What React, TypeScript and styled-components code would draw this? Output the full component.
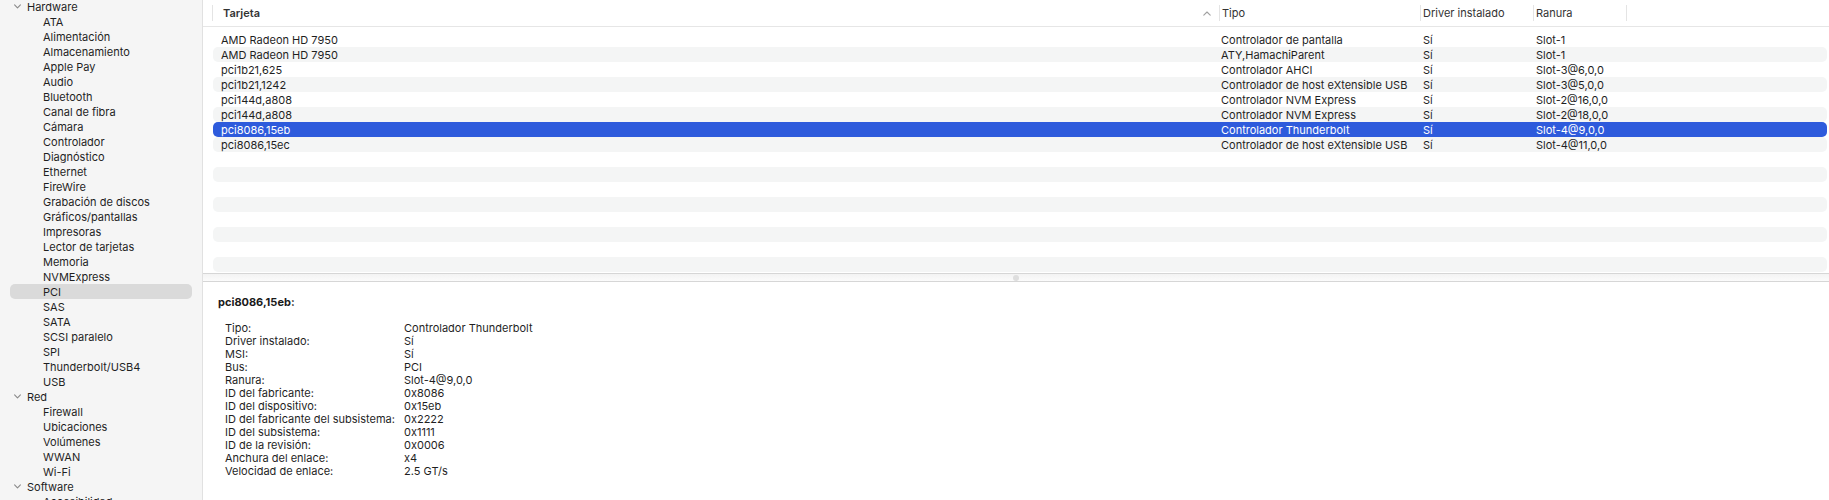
import React from "react";
import styled, { createGlobalStyle } from "styled-components";

const Global = createGlobalStyle`
  html, body { margin: 0; padding: 0; background: #ffffff; }
  body { font-family: Inter, "Liberation Sans", Arial, sans-serif; -webkit-font-smoothing: antialiased; }
  * { box-sizing: border-box; }
`;

const Window = styled.div`
  display: flex;
  width: 1829px;
  height: 500px;
  overflow: hidden;
  font-size: 11px;
  color: #1f1f1f;
`;

const Sidebar = styled.nav`
  width: 203px;
  flex: none;
  background: #f5f5f5;
  border-right: 1px solid #e1e1e1;
  overflow: hidden;
`;

const SideList = styled.ul`
  list-style: none;
  margin: -1px 0 0 0;
  padding: 0 10px;
  display: flex;
  flex-direction: column;
`;

const SideRow = styled.li<{ $group?: boolean; $active?: boolean }>`
  height: 15px;
  display: flex;
  align-items: center;
  padding-left: ${(p) => (p.$group ? "4px" : "33px")};
  border-radius: 5px;
  background: ${(p) => (p.$active ? "#dadada" : "transparent")};
  white-space: nowrap;
  color: #1f1f1f;
`;

const Chevron = styled.svg`
  width: 7px;
  height: 5px;
  margin-right: 6px;
  flex: none;
`;

const Main = styled.main`
  flex: 1;
  display: flex;
  flex-direction: column;
  min-width: 0;
`;

const TableArea = styled.section`
  height: 273px;
  flex: none;
  display: flex;
  flex-direction: column;
  overflow: hidden;
`;

const Header = styled.div`
  height: 27px;
  flex: none;
  display: flex;
  align-items: center;
  padding-left: 9px;
  border-bottom: 1px solid #e6e6e6;
  color: #333333;
`;

const HeadCell = styled.div<{ $w: number; $pad: number; $bold?: boolean; $last?: boolean }>`
  width: ${(p) => p.$w}px;
  height: 16px;
  display: flex;
  align-items: center;
  padding-left: ${(p) => p.$pad}px;
  padding-right: 8px;
  border-left: 1px solid #e4e4e4;
  border-right: ${(p) => (p.$last ? "1px solid #e4e4e4" : "none")};
  font-weight: ${(p) => (p.$bold ? 600 : 400)};
`;

const HeadLabel = styled.span`
  flex: 1;
`;

const SortIcon = styled.svg`
  width: 8px;
  height: 5px;
  flex: none;
`;

const Rows = styled.div`
  padding: 5px 2px 0 10px;
  display: flex;
  flex-direction: column;
`;

const Row = styled.div<{ $stripe?: boolean; $selected?: boolean }>`
  height: 15px;
  display: grid;
  grid-template-columns: 1000px 202px 113px 1fr;
  align-items: center;
  padding-left: 8px;
  border-radius: 5px;
  white-space: nowrap;
  background: ${(p) => (p.$selected ? "#2e5bdc" : p.$stripe ? "#f4f5f5" : "transparent")};
  color: ${(p) => (p.$selected ? "#ffffff" : "#1f1f1f")};
`;

const Cell = styled.span`
  overflow: hidden;
`;

const Splitter = styled.div`
  height: 9px;
  flex: none;
  border-top: 1px solid #d6d6d6;
  border-bottom: 1px solid #d6d6d6;
  background: linear-gradient(#f3f3f3, #fbfbfb);
  display: flex;
  align-items: center;
  justify-content: center;
`;

const Grip = styled.span`
  width: 6px;
  height: 6px;
  border-radius: 50%;
  background: #dedede;
`;

const Detail = styled.section`
  flex: 1;
  padding: 13px 0 0 15px;
`;

const DetailTitle = styled.div`
  font-weight: 700;
  height: 14px;
  line-height: 14px;
  color: #1a1a1a;
`;

const Props = styled.dl`
  margin: 13px 0 0 7px;
  display: grid;
  grid-template-columns: 179px auto;
  grid-auto-rows: 13px;
  align-items: center;
  line-height: 13px;
`;

const Term = styled.dt`
  margin: 0;
  white-space: nowrap;
`;

const Def = styled.dd`
  margin: 0;
  white-space: nowrap;
`;

type SideItem = { label: string; group?: boolean; active?: boolean };

const sideItems: SideItem[] = [
  { label: "Hardware", group: true },
  { label: "ATA" },
  { label: "Alimentación" },
  { label: "Almacenamiento" },
  { label: "Apple Pay" },
  { label: "Audio" },
  { label: "Bluetooth" },
  { label: "Canal de fibra" },
  { label: "Cámara" },
  { label: "Controlador" },
  { label: "Diagnóstico" },
  { label: "Ethernet" },
  { label: "FireWire" },
  { label: "Grabación de discos" },
  { label: "Gráficos/pantallas" },
  { label: "Impresoras" },
  { label: "Lector de tarjetas" },
  { label: "Memoria" },
  { label: "NVMExpress" },
  { label: "PCI", active: true },
  { label: "SAS" },
  { label: "SATA" },
  { label: "SCSI paralelo" },
  { label: "SPI" },
  { label: "Thunderbolt/USB4" },
  { label: "USB" },
  { label: "Red", group: true },
  { label: "Firewall" },
  { label: "Ubicaciones" },
  { label: "Volúmenes" },
  { label: "WWAN" },
  { label: "Wi-Fi" },
  { label: "Software", group: true },
  { label: "Accesibilidad" },
];

const cards: [string, string, string, string][] = [
  ["AMD Radeon HD 7950", "Controlador de pantalla", "Sí", "Slot-1"],
  ["AMD Radeon HD 7950", "ATY,HamachiParent", "Sí", "Slot-1"],
  ["pci1b21,625", "Controlador AHCI", "Sí", "Slot-3@6,0,0"],
  ["pci1b21,1242", "Controlador de host eXtensible USB", "Sí", "Slot-3@5,0,0"],
  ["pci144d,a808", "Controlador NVM Express", "Sí", "Slot-2@16,0,0"],
  ["pci144d,a808", "Controlador NVM Express", "Sí", "Slot-2@18,0,0"],
  ["pci8086,15eb", "Controlador Thunderbolt", "Sí", "Slot-4@9,0,0"],
  ["pci8086,15ec", "Controlador de host eXtensible USB", "Sí", "Slot-4@11,0,0"],
];

const details: [string, string][] = [
  ["Tipo:", "Controlador Thunderbolt"],
  ["Driver instalado:", "Sí"],
  ["MSI:", "Sí"],
  ["Bus:", "PCI"],
  ["Ranura:", "Slot-4@9,0,0"],
  ["ID del fabricante:", "0x8086"],
  ["ID del dispositivo:", "0x15eb"],
  ["ID del fabricante del subsistema:", "0x2222"],
  ["ID del subsistema:", "0x1111"],
  ["ID de la revisión:", "0x0006"],
  ["Anchura del enlace:", "x4"],
  ["Velocidad de enlace:", "2.5 GT/s"],
];

const SELECTED = 6;
const TOTAL_ROWS = 16;

export default function App() {
  const rows = Array.from({ length: TOTAL_ROWS }, (_, i) => cards[i] ?? null);
  return (
    <>
      <Global />
      <Window>
        <Sidebar>
          <SideList>
            {sideItems.map((it, i) => (
              <SideRow key={i} $group={it.group} $active={it.active}>
                {it.group && (
                  <Chevron viewBox="0 0 7 5">
                    <path d="M0.6 0.8 L3.5 3.8 L6.4 0.8" fill="none" stroke="#8a8a8a" strokeWidth="1.1" strokeLinecap="round" strokeLinejoin="round" />
                  </Chevron>
                )}
                {it.label}
              </SideRow>
            ))}
          </SideList>
        </Sidebar>
        <Main>
          <TableArea>
            <Header>
              <HeadCell $w={1007} $pad={10} $bold>
                <HeadLabel>Tarjeta</HeadLabel>
                <SortIcon viewBox="0 0 8 5">
                  <path d="M0.8 4.2 L4 1 L7.2 4.2" fill="none" stroke="#a0a0a0" strokeWidth="1.1" strokeLinecap="round" strokeLinejoin="round" />
                </SortIcon>
              </HeadCell>
              <HeadCell $w={201} $pad={2}>
                <HeadLabel>Tipo</HeadLabel>
              </HeadCell>
              <HeadCell $w={113} $pad={2}>
                <HeadLabel>Driver instalado</HeadLabel>
              </HeadCell>
              <HeadCell $w={94} $pad={2} $last>
                <HeadLabel>Ranura</HeadLabel>
              </HeadCell>
            </Header>
            <Rows>
              {rows.map((r, i) => (
                <Row key={i} $stripe={i % 2 === 1} $selected={i === SELECTED}>
                  {r && r.map((c, j) => <Cell key={j}>{c}</Cell>)}
                </Row>
              ))}
            </Rows>
          </TableArea>
          <Splitter>
            <Grip />
          </Splitter>
          <Detail>
            <DetailTitle>pci8086,15eb:</DetailTitle>
            <Props>
              {details.map(([k, v]) => (
                <React.Fragment key={k}>
                  <Term>{k}</Term>
                  <Def>{v}</Def>
                </React.Fragment>
              ))}
            </Props>
          </Detail>
        </Main>
      </Window>
    </>
  );
}
